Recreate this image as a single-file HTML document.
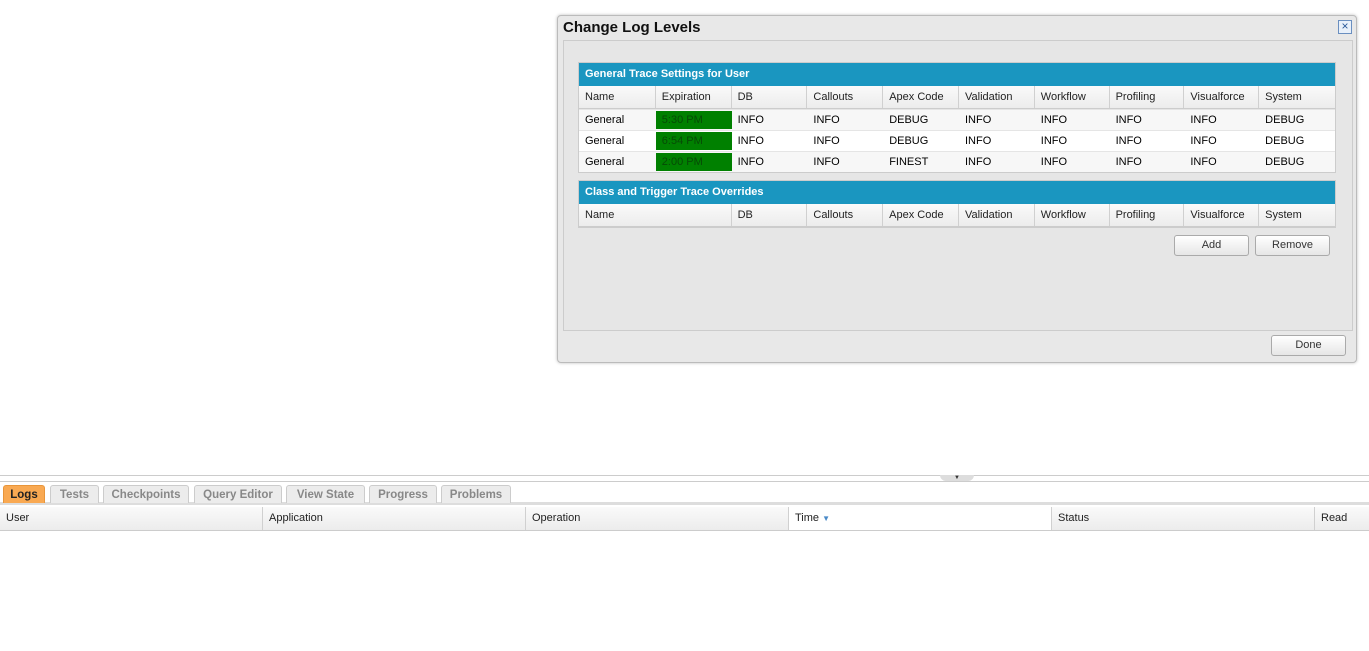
<!DOCTYPE html>
<html><head><style>
*{box-sizing:border-box;margin:0;padding:0}
body{width:1369px;height:651px;background:#fff;font-family:"Liberation Sans",sans-serif;font-size:11px;color:#000;position:relative;overflow:hidden}
.abs{position:absolute}
.dlg{left:557px;top:15px;width:800px;height:348px;background:#e8e8e8;border:1px solid #bbb;border-radius:4px;box-shadow:0 0 3px rgba(0,0,0,.25)}
.title{left:5px;top:3px;font-size:15px;font-weight:bold;color:#111}
.close{right:4px;top:4px;width:14px;height:14px;border:1px solid #6a8fc0;background:#e8f0fa;color:#2a5a9a;font-size:12px;line-height:11px;text-align:center}
.inner{left:5px;top:24px;width:790px;height:291px;border:1px solid #ccc;background:#e6e6e6}
.tbl{position:absolute;left:578px;width:758px;border:1px solid #ccc;background:#fff}
.bar{height:23px;background:#1a96c0;color:#fff;font-weight:bold;font-size:11px;line-height:23px;padding-left:6px}
.row{display:flex;height:21px;line-height:21px;border-top:1px solid #e5e5e5}
.row div{padding-left:6px;overflow:hidden;white-space:nowrap}
.hdr{height:23px;line-height:23px;background:linear-gradient(#fafafa,#ececec);border-top:0;border-bottom:1px solid #ccc;color:#222}
.hdr div{border-right:1px solid #d0d0d0}
.row:nth-child(odd):not(.hdr){background:#f7f7f7}
.g{background:#008000;color:#064a06;margin:1px 0;line-height:19px}
.btn{position:absolute;height:21px;border:1px solid #aaa;border-radius:3px;background:linear-gradient(#fff,#e6e6e6);text-align:center;line-height:19px;color:#333}
.tabs{left:0;top:481px;width:1369px;height:24px;border-top:1px solid #ccc;border-bottom:3px solid #ddd;background:#fff}
.tab{position:absolute;top:3px;height:18px;border:1px solid #ccc;border-bottom:0;border-radius:3px 3px 0 0;background:#ececec;color:#888;font-weight:bold;font-size:11.5px;line-height:18px;text-align:center}
.bh{left:0;top:507px;width:1369px;height:24px;display:flex;background:linear-gradient(#fafafa,#ececec);border-bottom:1px solid #ccc;line-height:23px;color:#222}
.bh div{border-right:1px solid #d0d0d0;padding-left:6px;height:23px}
</style></head><body>
<div class="abs dlg">
 <div class="abs title">Change Log Levels</div>
 <div class="abs close">×</div>
 <div class="abs inner"></div>
 <div class="btn" style="left:713px;top:319px;width:75px">Done</div>
</div>
<div class="tbl" style="top:62px">
 <div class="bar">General Trace Settings for User</div>
 <div class="row hdr"><div style="width:77px">Name</div><div style="width:76px">Expiration</div><div style="width:76px">DB</div><div style="width:76px">Callouts</div><div style="width:76px">Apex Code</div><div style="width:76px">Validation</div><div style="width:75px">Workflow</div><div style="width:75px">Profiling</div><div style="width:75px">Visualforce</div><div style="width:76px;border:0">System</div></div>
 <div class="row"><div style="width:77px">General</div><div class="g" style="width:76px">5:30 PM</div><div style="width:76px">INFO</div><div style="width:76px">INFO</div><div style="width:76px">DEBUG</div><div style="width:76px">INFO</div><div style="width:75px">INFO</div><div style="width:75px">INFO</div><div style="width:75px">INFO</div><div style="width:76px">DEBUG</div></div>
 <div class="row"><div style="width:77px">General</div><div class="g" style="width:76px">6:54 PM</div><div style="width:76px">INFO</div><div style="width:76px">INFO</div><div style="width:76px">DEBUG</div><div style="width:76px">INFO</div><div style="width:75px">INFO</div><div style="width:75px">INFO</div><div style="width:75px">INFO</div><div style="width:76px">DEBUG</div></div>
 <div class="row"><div style="width:77px">General</div><div class="g" style="width:76px">2:00 PM</div><div style="width:76px">INFO</div><div style="width:76px">INFO</div><div style="width:76px">FINEST</div><div style="width:76px">INFO</div><div style="width:75px">INFO</div><div style="width:75px">INFO</div><div style="width:75px">INFO</div><div style="width:76px">DEBUG</div></div>
</div>
<div class="tbl" style="top:180px">
 <div class="bar">Class and Trigger Trace Overrides</div>
 <div class="row hdr"><div style="width:153px">Name</div><div style="width:76px">DB</div><div style="width:76px">Callouts</div><div style="width:76px">Apex Code</div><div style="width:76px">Validation</div><div style="width:75px">Workflow</div><div style="width:75px">Profiling</div><div style="width:75px">Visualforce</div><div style="width:76px;border:0">System</div></div>
</div>
<div class="btn" style="left:1174px;top:235px;width:75px">Add</div>
<div class="btn" style="left:1255px;top:235px;width:75px">Remove</div>

<div class="abs" style="left:0;top:475px;width:1369px;height:1px;background:#ccc"></div>
<div class="abs" style="left:940px;top:475px;width:34px;height:6px;background:#ddd;border-radius:0 0 6px 6px;text-align:center;font-size:6px;line-height:6px;color:#333">▼</div>
<div class="abs tabs">
 <div class="tab" style="left:3px;width:42px;background:#f9a952;border-color:#e8953a;color:#222">Logs</div>
 <div class="tab" style="left:50px;width:49px">Tests</div>
 <div class="tab" style="left:103px;width:86px">Checkpoints</div>
 <div class="tab" style="left:194px;width:88px">Query Editor</div>
 <div class="tab" style="left:286px;width:79px">View State</div>
 <div class="tab" style="left:369px;width:68px">Progress</div>
 <div class="tab" style="left:441px;width:70px">Problems</div>
</div>
<div class="abs bh">
 <div style="width:263px">User</div><div style="width:263px">Application</div><div style="width:263px">Operation</div><div style="width:263px;background:#fff">Time <span style="color:#4a8ac8;font-size:8px">▼</span></div><div style="width:263px">Status</div><div style="width:54px;border:0">Read</div>
</div>
</body></html>
